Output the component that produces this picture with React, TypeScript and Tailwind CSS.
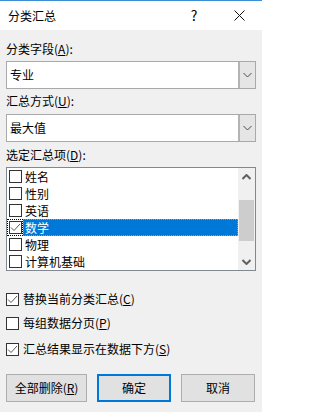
import React from "react";

const font = { fontFamily: '"Microsoft YaHei UI", "Noto Sans CJK SC", "Noto Sans", sans-serif' };

function Chevron({ up = false, bold = false }: { up?: boolean; bold?: boolean }) {
  return (
    <svg width="9" height="6" viewBox="0 0 9 6" className="block">
      <path
        d={up ? "M0.5 5 L4.5 1 L8.5 5" : "M0.5 1 L4.5 5 L8.5 1"}
        fill="none"
        stroke={bold ? "#606060" : "#4a4a4a"}
        strokeWidth={bold ? 2 : 1}
      />
    </svg>
  );
}

function Box({ checked = false }: { checked?: boolean }) {
  return (
    <div className="w-[13px] h-[13px] border border-[#333] bg-white flex items-center justify-center shrink-0">
      {checked && (
        <svg width="11" height="11" viewBox="0 0 11 11">
          <path d="M1 5.5 L4 8.5 L10 2" fill="none" stroke="#5a5a5a" strokeWidth="1" />
        </svg>
      )}
    </div>
  );
}

function Combo({ value }: { value: string }) {
  return (
    <div className="h-[28px] w-[250px] border border-[#a9a9a9] bg-white flex">
      <div className="flex-1 flex items-center pl-[3px] text-[12px] text-black">{value}</div>
      <div className="w-[17px] bg-[#e5e5e5] border-l-2 border-[#b4b4b4] flex items-center justify-center">
        <Chevron />
      </div>
    </div>
  );
}

function Label({ text, key_ }: { text: string; key_: string }) {
  return (
    <div className="h-[16px] leading-[16px] text-[12px] text-black">
      {text}(<span className="underline">{key_}</span>):
    </div>
  );
}

const items = ["姓名", "性别", "英语", "数学", "物理", "计算机基础"];

export default function App() {
  return (
    <div className="w-[262px] h-[412px] bg-[#f0f0f0] border-t border-[#3c8fd6] flex flex-col" style={font}>
      {/* TITLE BAR */}
      <div className="h-[29px] bg-white flex items-center text-[12px] text-black">
        <span className="pl-[8px] flex-1">分类汇总</span>
        <span className="w-[14px] text-[14px] text-center mr-[33px]">?</span>
        <svg width="11" height="11" viewBox="0 0 11 11" className="mr-[17px]">
          <path d="M0.5 0.5 L10.5 10.5 M10.5 0.5 L0.5 10.5" stroke="#111" strokeWidth="1" />
        </svg>
      </div>

      {/* BODY */}
      <div className="px-[6px] flex flex-col">
        <div className="mt-[11px]">
          <Label text="分类字段" key_="A" />
        </div>
        <div className="mt-[4px]">
          <Combo value="专业" />
        </div>
        <div className="mt-[4px]">
          <Label text="汇总方式" key_="U" />
        </div>
        <div className="mt-[5px]">
          <Combo value="最大值" />
        </div>
        <div className="mt-[5px]">
          <Label text="选定汇总项" key_="D" />
        </div>

        {/* LIST */}
        <div className="mt-[4px] h-[104px] w-[250px] border border-[#828790] bg-white flex">
          <div className="flex-1 flex flex-col">
            {items.map((it, i) =>
              i === 3 ? (
                <div key={it} className="h-[17px] flex items-stretch">
                  <div className="w-[16px] border border-dotted border-black flex items-center justify-center">
                    <Box checked />
                  </div>
                  <div className="flex-1 bg-[#0078d7] border border-dotted border-[#f08a24] text-white text-[12px] flex items-center pl-[1px]">
                    {it}
                  </div>
                </div>
              ) : (
                <div key={it} className="h-[17px] flex items-center pl-[2px] gap-[3px] text-[12px] text-black">
                  <Box />
                  <span>{it}</span>
                </div>
              )
            )}
          </div>
          <div className="w-[17px] bg-[#f0f0f0] flex flex-col items-center">
            <div className="h-[17px] flex items-center justify-center">
              <Chevron up bold />
            </div>
            <div className="mt-[15px] h-[41px] w-[15px] bg-[#cdcdcd]" />
            <div className="flex-1" />
            <div className="h-[17px] flex items-center justify-center">
              <Chevron bold />
            </div>
          </div>
        </div>

        {/* OPTIONS */}
        <div className="mt-[20px] h-[16px] flex items-center gap-[4px] text-[12px] text-black">
          <Box checked />
          <span>
            替换当前分类汇总(<span className="underline">C</span>)
          </span>
        </div>
        <div className="mt-[8px] h-[16px] flex items-center gap-[4px] text-[12px] text-black">
          <Box />
          <span>
            每组数据分页(<span className="underline">P</span>)
          </span>
        </div>
        <div className="mt-[10px] h-[16px] flex items-center gap-[4px] text-[12px] text-black">
          <Box checked />
          <span>
            汇总结果显示在数据下方(<span className="underline">S</span>)
          </span>
        </div>

        {/* BUTTONS */}
        <div className="mt-[17px] flex gap-[10px] text-[12px] text-black">
          <div className="w-[81px] h-[28px] bg-[#e1e1e1] border border-[#adadad] flex items-center justify-center">
            全部删除(<span className="underline">R</span>)
          </div>
          <div className="w-[74px] h-[28px] bg-[#e1e1e1] border-2 border-[#0078d7] flex items-center justify-center">
            确定
          </div>
          <div className="w-[74px] h-[28px] bg-[#e1e1e1] border border-[#adadad] flex items-center justify-center">
            取消
          </div>
        </div>
      </div>
    </div>
  );
}
